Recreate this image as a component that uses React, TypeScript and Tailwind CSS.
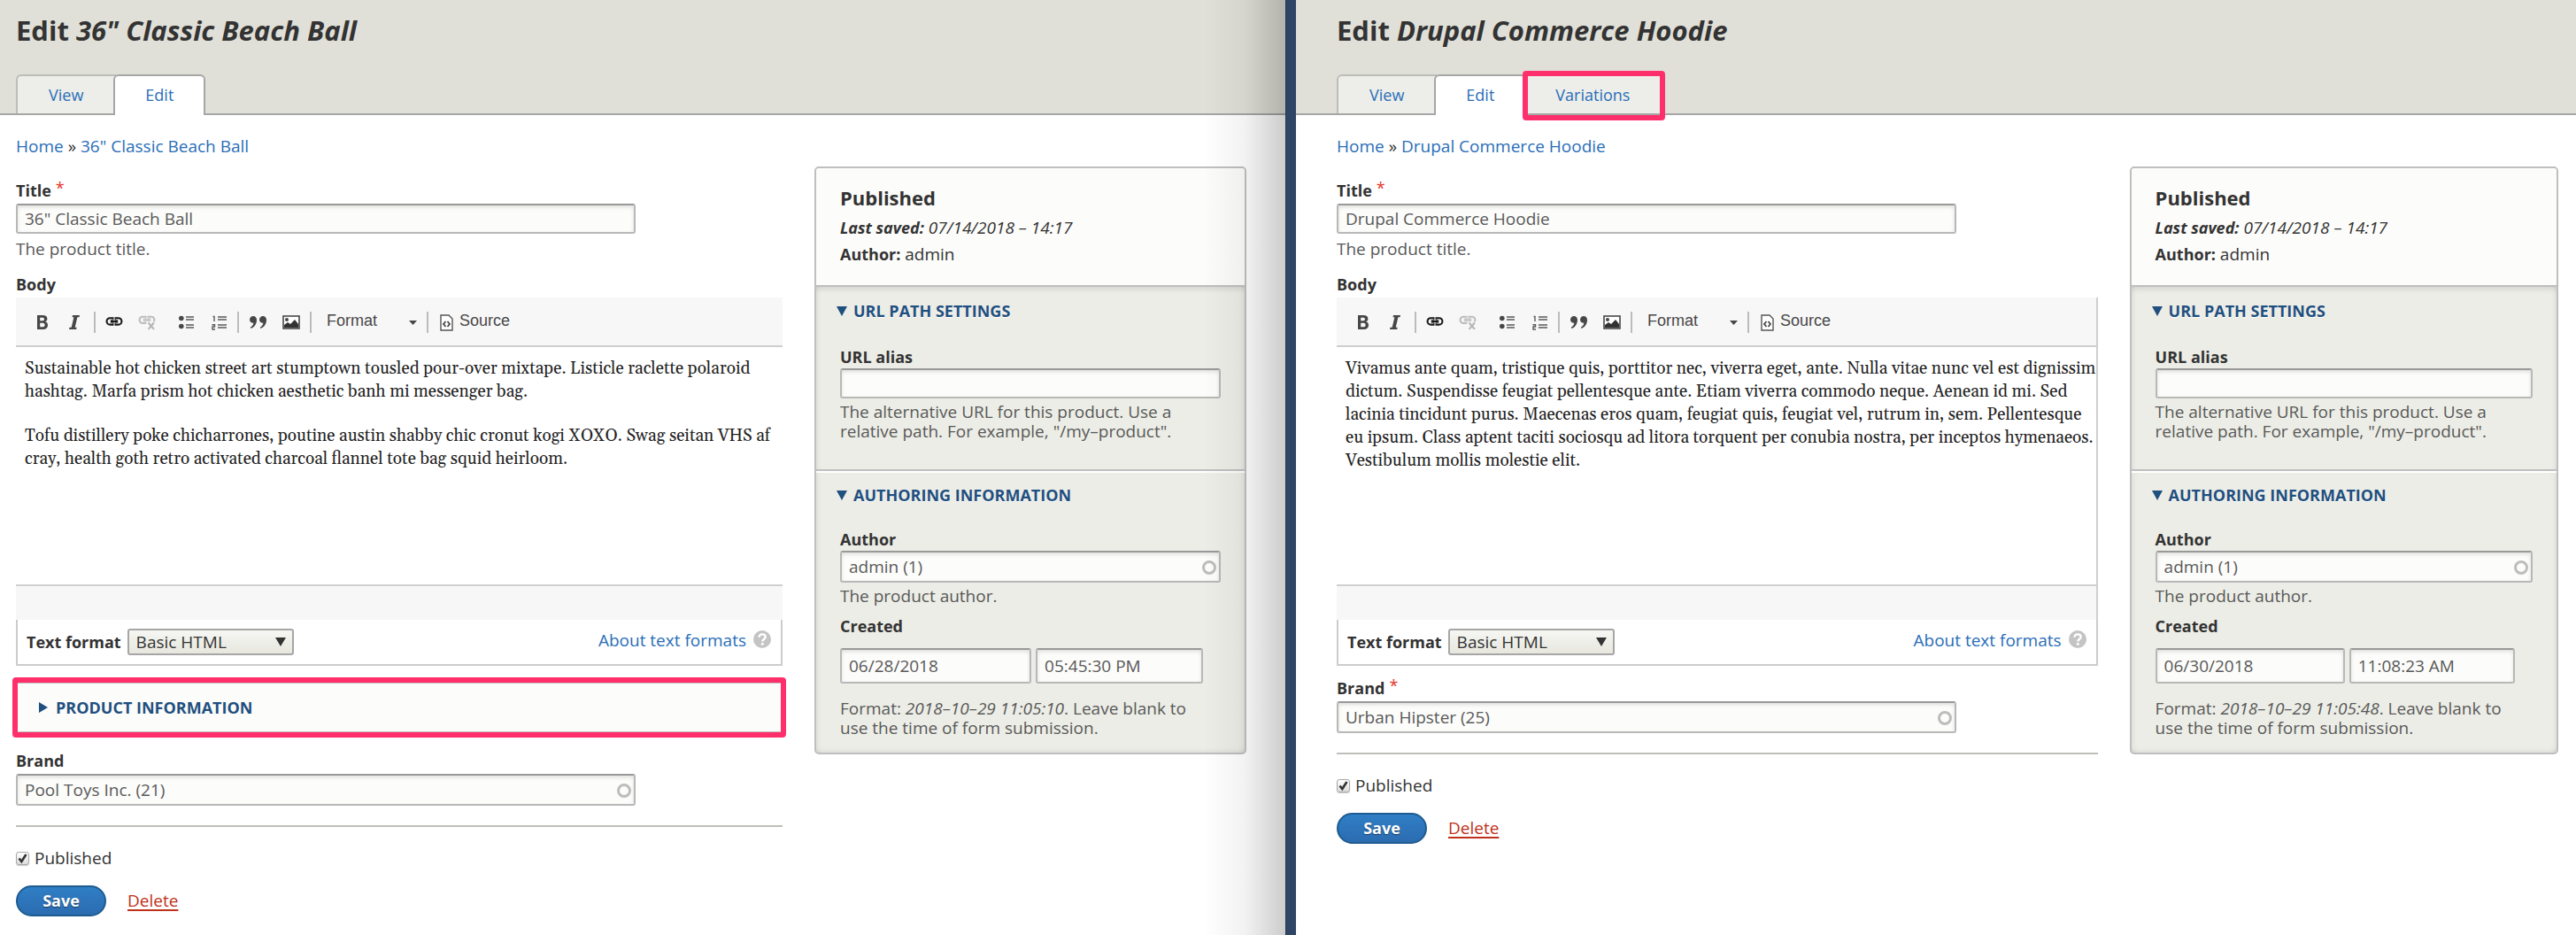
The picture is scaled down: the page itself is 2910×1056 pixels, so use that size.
import { useId } from 'react';
import type { ReactNode } from 'react';

const INPUT =
  'block w-full rounded-[3px] border-2 border-[#b8b8b8] border-t-[#999999] bg-[#fcfcfa] px-2 text-[#595959] shadow-[inset_0_2px_4px_rgba(0,0,0,0.12)] outline-none';
const LABEL = 'block text-[18px] leading-[26px] font-bold';
const HELP = 'leading-[22px] text-[#595959]';

type Product = {
  name: string;
  tabs: string[];
  highlightedTab?: string;
  body: string[][];
  productInfo: boolean;
  brand: string;
  brandRequired: boolean;
  date: string;
  time: string;
  format: string;
  editorEdge: boolean;
};

const ball: Product = {
  name: '36" Classic Beach Ball',
  tabs: ['View', 'Edit'],
  body: [
    [
      'Sustainable hot chicken street art stumptown tousled pour-over mixtape. Listicle raclette polaroid',
      'hashtag. Marfa prism hot chicken aesthetic banh mi messenger bag.',
    ],
    [
      'Tofu distillery poke chicharrones, poutine austin shabby chic cronut kogi XOXO. Swag seitan VHS af',
      'cray, health goth retro activated charcoal flannel tote bag squid heirloom.',
    ],
  ],
  productInfo: true,
  brand: 'Pool Toys Inc. (21)',
  brandRequired: false,
  date: '06/28/2018',
  time: '05:45:30 PM',
  format: '2018–10–29 11:05:10',
  editorEdge: false,
};

const hoodie: Product = {
  name: 'Drupal Commerce Hoodie',
  tabs: ['View', 'Edit', 'Variations'],
  highlightedTab: 'Variations',
  body: [
    [
      'Vivamus ante quam, tristique quis, porttitor nec, viverra eget, ante. Nulla vitae nunc vel est dignissim',
      'dictum. Suspendisse feugiat pellentesque ante. Etiam viverra commodo neque. Aenean id mi. Sed',
      'lacinia tincidunt purus. Maecenas eros quam, feugiat quis, feugiat vel, rutrum in, sem. Pellentesque',
      'eu ipsum. Class aptent taciti sociosqu ad litora torquent per conubia nostra, per inceptos hymenaeos.',
      'Vestibulum mollis molestie elit.',
    ],
  ],
  productInfo: false,
  brand: 'Urban Hipster (25)',
  brandRequired: true,
  date: '06/30/2018',
  time: '11:08:23 AM',
  format: '2018–10–29 11:05:48',
  editorEdge: true,
};

function Required() {
  return <span className="ml-[5px] align-[3px] leading-none font-normal text-[#e5352b]">*</span>;
}

function Tool({ label, className, children }: { label: string; className: string; children: ReactNode }) {
  return (
    <button type="button" aria-label={label} className={`shrink-0 ${className}`}>
      {children}
    </button>
  );
}

function Separator({ className }: { className: string }) {
  return <span className={`h-6 w-[2px] shrink-0 bg-[#bcbcbc] ${className}`} />;
}

function Chain({ color }: { color: string }) {
  return (
    <g fill="none" stroke={color}>
      <path strokeWidth="2" d="M8.5 2.5H5a3.5 3.5 0 0 0 0 7h3.500M10.500 2.500H14a3.500 3.500 0 0 1 0 7h-3.500" />
      <path strokeWidth="1" d="M8.500 4.500H5.500M10.500 4.500h3M8.500 7.500H5.500M10.500 7.500h3" opacity=".6" />
      <path strokeWidth="2" d="M5.500 6h8" />
      <path strokeWidth="1" d="M8.500 1.500v3M10.500 1.500v3M8.500 7.500v3M10.500 7.500v3" />
    </g>
  );
}

function Toolbar() {
  return (
    <div className="flex h-[54px] items-center bg-[#f7f7f7] pt-[2px] pl-6 text-[#474747]">
      <Tool label="Bold" className="w-3">
        <svg width="12" height="16" viewBox="0 0 12 16" className="block">
          <path
            fill="#474747"
            fillRule="evenodd"
            d="M0 0h6.200C9.600 0 11.400 1.500 11.400 4c0 1.700-.9 2.900-2.300 3.300C10.900 7.700 12 9 12 11.200 12 14.200 9.900 16 6.500 16H0zM3.200 2.700v3.500h2.500c1.500 0 2.300-.6 2.300-1.800S7.300 2.700 5.800 2.700zM3.200 8.800v4.500h2.900c1.600 0 2.500-.8 2.500-2.300S7.700 8.800 6.100 8.800z"
          />
        </svg>
      </Tool>
      <Tool label="Italic" className="ml-6 w-3">
        <svg width="12" height="16" viewBox="0 0 12 16" className="block">
          <path fill="#474747" d="M4 0h8l-.5 2.300H9.400L6.700 13.700h2L8.200 16H0l.5-2.300h2.200L5.400 2.300H3.500z" />
        </svg>
      </Tool>
      <Separator className="ml-4" />
      <Tool label="Link" className="ml-[11px]">
        <svg width="20" height="16" viewBox="0 0 19 14" className="block">
          <Chain color="#1a1a1a" />
        </svg>
      </Tool>
      <Tool label="Unlink" className="ml-[17px]">
        <svg width="20" height="18" viewBox="0 0 19 17" className="block">
          <Chain color="#bdbdbd" />
          <rect x="9" y="8" width="10" height="9" fill="#f7f7f7" />
          <path stroke="#b5b5b5" strokeWidth="2" d="m11 9 6 7M17 9l-6 7" />
        </svg>
      </Tool>
      <Tool label="Bulleted list" className="ml-[26px]">
        <svg width="17" height="16" viewBox="0 0 17 16" className="block">
          <circle cx="2.800" cy="3.500" r="2.800" fill="#474747" />
          <circle cx="2.800" cy="12.500" r="2.800" fill="#474747" />
          <path stroke="#5a5a5a" strokeWidth="1.400" d="M8 2h9M8 5h9M8 11h9M8 14h9" />
        </svg>
      </Tool>
      <Tool label="Numbered list" className="ml-5">
        <svg width="17" height="17" viewBox="0 0 17 17" className="block">
          <path fill="none" stroke="#5a5a5a" strokeWidth="1.400" d="M1.500 1.500H3V7M.5 10.700h3v2.300H1v3h3" />
          <path stroke="#5a5a5a" strokeWidth="1.400" d="M7 2h10M7 5h10M7 11h10M7 14h10" />
        </svg>
      </Tool>
      <Separator className="ml-3" />
      <Tool label="Block quote" className="ml-3">
        <svg width="19" height="14" viewBox="0 0 19 14" className="block">
          <path
            fill="#474747"
            d="M4 0c2.400 0 4 1.700 4 4.300C8 9 5.500 12.500 1.500 14L.8 12.800c2-1.200 3.300-2.800 3.600-5C1.800 8 0 6.300 0 4 0 1.700 1.800 0 4 0zM15 0c2.400 0 4 1.700 4 4.300 0 4.700-2.500 8.200-6.500 9.700l-.7-1.200c2-1.200 3.300-2.800 3.600-5C12.800 8 11 6.300 11 4c0-2.300 1.800-4 4-4z"
          />
        </svg>
      </Tool>
      <Tool label="Image" className="ml-[18px]">
        <svg width="20" height="16" viewBox="0 0 20 16" className="block">
          <rect x="1" y="1" width="18" height="14" fill="#fff" stroke="#474747" strokeWidth="1.600" />
          <circle cx="5" cy="5" r="2" fill="#474747" />
          <path fill="#333" d="M2 14v-3l4-3 3 2 5-5 4 5v4z" />
        </svg>
      </Tool>
      <Separator className="ml-[11px]" />
      <button
        type="button"
        className="ml-[17px] flex w-[102px] shrink-0 items-center justify-between font-['Liberation_Sans',Arial,sans-serif] text-[18px] leading-6"
      >
        <span className="pb-1">Format</span>
        <svg width="9" height="5" viewBox="0 0 9 5" className="block">
          <path fill="#474747" d="M0 0h9L4.500 5z" />
        </svg>
      </button>
      <Separator className="ml-[11px]" />
      <button
        type="button"
        className="ml-[13px] flex shrink-0 items-center font-['Liberation_Sans',Arial,sans-serif] text-[18px] leading-6"
      >
        <svg width="15" height="19" viewBox="0 0 15 19" className="block">
          <path fill="#fff" stroke="#555" strokeWidth="1.400" d="M1 1h9l4 4v13H1z" />
          <path fill="none" stroke="#474747" strokeWidth="1.800" d="M6.500 8 4 11l2.500 3M8.500 8l2.500 3-2.500 3" />
        </svg>
        <span className="ml-[7px] pb-1">Source</span>
      </button>
    </div>
  );
}

function Autocomplete({ id, value }: { id: string; value: string }) {
  return (
    <div className="relative">
      <input id={id} defaultValue={value} className={`${INPUT} h-9`} />
      <span className="pointer-events-none absolute top-[11px] right-[5px] size-4 rounded-full border-[3px] border-[#bdbdbd]" />
    </div>
  );
}

function Summary({ open, children }: { open?: boolean; children: ReactNode }) {
  return (
    <summary className="flex list-none items-center text-[18px] leading-[26px] font-bold text-[#1f4f7f] uppercase [text-shadow:0_1px_0_#fff]">
      {open ? (
        <svg width="12" height="11" viewBox="0 0 12 11" className="mr-[7px] -ml-1">
          <path fill="#1f4f7f" d="M0 0h12L6 11z" />
        </svg>
      ) : (
        <svg width="10" height="12" viewBox="0 0 10 12" className="mr-[9px]">
          <path fill="#1f4f7f" d="M0 0l10 6-10 6z" />
        </svg>
      )}
      {children}
    </summary>
  );
}

function Sidebar({ product }: { product: Product }) {
  const id = useId();
  return (
    <aside className="mt-[9px] self-start rounded-[5px] border-2 border-[#bfbfbf] bg-[#ecede6]">
      <div className="rounded-t-[3px] border-b-2 border-[#bfbfbf] bg-[#fcfcfa] px-[27px] pt-[18px] pb-5">
        <h2 className="text-[22px] leading-[30px] font-bold">Published</h2>
        <p className="mt-1 leading-[30px] italic">
          <strong className="text-[18px] font-bold">Last saved:</strong> 07/14/2018 – 14:17
        </p>
        <p className="leading-[30px]">
          <strong className="text-[18px] font-bold">Author:</strong> admin
        </p>
      </div>
      <details
        open
        className="border-b-2 border-[#bfbfbf] px-[27px] pt-[14px] pb-8 shadow-[inset_0_6px_6px_-4px_rgba(0,0,0,0.12),inset_6px_0_6px_-5px_rgba(0,0,0,0.08),inset_-6px_0_6px_-5px_rgba(0,0,0,0.08)]"
      >
        <Summary open>URL path settings</Summary>
        <label htmlFor={`${id}-alias`} className={`${LABEL} mt-[26px]`}>
          URL alias
        </label>
        <input id={`${id}-alias`} className={`${INPUT} h-[34px]`} />
        <p className={`${HELP} mt-1`}>
          The alternative URL for this product. Use a<br />
          relative path. For example, "/my–product".
        </p>
      </details>
      <details
        open
        className="rounded-b-[3px] border-t-2 border-white px-[27px] pt-3 pb-[17px] shadow-[inset_6px_0_6px_-5px_rgba(0,0,0,0.08),inset_-6px_0_6px_-5px_rgba(0,0,0,0.08),inset_0_-6px_6px_-5px_rgba(0,0,0,0.08)]"
      >
        <Summary open>Authoring information</Summary>
        <label htmlFor={`${id}-author`} className={`${LABEL} mt-6`}>
          Author
        </label>
        <Autocomplete id={`${id}-author`} value="admin (1)" />
        <p className={`${HELP} mt-1`}>The product author.</p>
        <h4 className={`${LABEL} mt-[10px] mb-3`}>Created</h4>
        <div className="flex gap-[5px] pr-5">
          <input aria-label="Date" defaultValue={product.date} className={`${INPUT} h-10 min-w-0 flex-[217]`} />
          <input aria-label="Time" defaultValue={product.time} className={`${INPUT} h-10 min-w-0 flex-[187]`} />
        </div>
        <p className={`${HELP} mt-[17px]`}>
          Format: <em>{product.format}</em>. Leave blank to
          <br />
          use the time of form submission.
        </p>
      </details>
    </aside>
  );
}

function Form({ product }: { product: Product }) {
  const id = useId();
  return (
    <form className="min-w-0 pt-[23px]" onSubmit={(e) => e.preventDefault()}>
      <div className="w-[700px] max-w-full">
        <label htmlFor={`${id}-title`} className={`${LABEL} mb-[2px]`}>
          Title
          <Required />
        </label>
        <input id={`${id}-title`} defaultValue={product.name} className={`${INPUT} h-[34px]`} />
        <p className={`${HELP} mt-[6px]`}>The product title.</p>
      </div>

      <div id={`${id}-body`} className={`${LABEL} mt-4 mb-[2px]`}>
        Body
      </div>
      <div className={product.editorEdge ? 'border-r-2 border-[#cfcfcf]' : ''}>
        <Toolbar />
        <div
          role="textbox"
          aria-multiline="true"
          aria-labelledby={`${id}-body`}
          contentEditable
          suppressContentEditableWarning
          className="h-[270px] space-y-6 border-t-2 border-[#cfcfcf] pt-[11px] pl-[10px] font-[Gelasio,Georgia,serif] text-[19px] leading-[26px] whitespace-nowrap text-[#222222] outline-none"
        >
          {product.body.map((lines) => (
            <p key={lines[0]}>
              {lines.map((line) => (
                <span key={line} className="block">
                  {line}
                </span>
              ))}
            </p>
          ))}
        </div>
        <div className="h-10 border-t-2 border-[#cfcfcf] bg-[#f7f7f7]" />
      </div>
      <div className="flex h-[52px] items-start justify-between border-x-2 border-b-2 border-[#cccccc] pt-[10px] pr-[11px] pl-[10px]">
        <div className="flex items-center">
          <label htmlFor={`${id}-format`} className="text-[18px] font-bold">
            Text format
          </label>
          <div className="relative ml-[7px]">
            <select
              id={`${id}-format`}
              className="block h-[30px] w-[188px] appearance-none rounded-[3px] border-2 border-[#a6a6a6] bg-linear-to-b from-[#f6f6f3] to-[#e7e7df] pl-2 leading-[26px] text-[#333333]"
            >
              <option>Basic HTML</option>
            </select>
            <svg
              width="12"
              height="10"
              viewBox="0 0 12 10"
              className="pointer-events-none absolute top-[10px] right-[9px]"
            >
              <path fill="#333" d="M0 0h12L6 10z" />
            </svg>
          </div>
        </div>
        <a href="#formats" className="flex items-center leading-[26px] text-[#2a6eb8]">
          About text formats
          <svg width="20" height="20" viewBox="0 0 20 20" className="-mt-[2px] ml-2">
            <circle cx="10" cy="10" r="10" fill="#c4c4c4" />
            <path
              fill="none"
              stroke="#fff"
              strokeWidth="2.400"
              d="M6.500 7.800C6.500 5.600 8 4.400 10 4.400s3.600 1.200 3.600 3c0 2.400-3.200 2.400-3.200 5"
            />
            <circle cx="10.300" cy="15.200" r="1.500" fill="#fff" />
          </svg>
        </a>
      </div>

      {product.productInfo && (
        <div className="relative mt-[18px]">
          <details className="border-2 border-[#bfbfbf] bg-[#fcfcfa] py-[14px] pl-6">
            <Summary>Product information</Summary>
          </details>
          <span className="pointer-events-none absolute -inset-x-1 -inset-y-[5px] rounded-[4px] border-[6px] border-[#ff2f6c]" />
        </div>
      )}

      <div className={`w-[700px] max-w-full ${product.productInfo ? 'mt-[18px]' : 'mt-3'}`}>
        <label htmlFor={`${id}-brand`} className={`${LABEL} mb-[2px]`}>
          Brand
          {product.brandRequired && <Required />}
        </label>
        <Autocomplete id={`${id}-brand`} value={product.brand} />
      </div>

      <hr className="mt-[22px] border-t-2 border-[#bfbfba]" />

      <label className="mt-[22px] flex items-center gap-[6px] leading-[26px]">
        <span className="relative block size-[15px]">
          <input
            type="checkbox"
            defaultChecked
            className="peer block size-[15px] appearance-none rounded-[3px] border border-[#a8a8a8] bg-linear-to-b from-white to-[#dcdcdc] shadow-[0_1px_1px_rgba(0,0,0,0.2)]"
          />
          <svg
            viewBox="0 0 15 15"
            className="pointer-events-none absolute inset-0 hidden size-[15px] peer-checked:block"
          >
            <path fill="none" stroke="#333" strokeWidth="2.600" d="M3.500 7.500 6.300 11l5.200-8" />
          </svg>
        </span>
        Published
      </label>

      <div className="mt-[18px] flex items-center">
        <button
          type="submit"
          className="h-[35px] w-[102px] rounded-full border-2 border-[#1e5c90] bg-linear-to-b from-[#2f7ec6] to-[#2c6cb0] pb-[2px] text-[18px] leading-[28px] font-bold text-white [text-shadow:0_1px_1px_rgba(0,0,0,0.5)]"
        >
          Save
        </button>
        <a href="#delete" className="ml-6 pb-[2px] leading-[26px] text-[#c0311a] underline decoration-2 underline-offset-[3px]">
          Delete
        </a>
      </div>
    </form>
  );
}

function EditPage({ product, className }: { product: Product; className: string }) {
  return (
    <section className="relative min-w-0 bg-white">
      <header className={`border-b-2 border-[#a6a6a6] bg-[#e0e0d8] pt-[14px] ${className}`}>
        <h1 className="mb-[30px] text-[31px] leading-[40px] font-bold">
          Edit <em>{product.name}</em>
        </h1>
        <nav className="-mb-[2px] flex items-start text-[18px]">
          {product.tabs.map((tab, i) => (
            <a
              key={tab}
              href={`#${tab.toLowerCase()}`}
              className={
                tab === 'Edit'
                  ? 'relative rounded-t-[6px] border-x-2 border-t-2 border-[#a6a6a6] bg-white px-[34px] pt-[7px] pb-[9px] leading-[28px] text-[#2a6eb8]'
                  : `relative border-t-2 border-[#bdbdb9] bg-[#edeee9] pt-[7px] pb-[7px] leading-[28px] text-[#2a6eb8] ${
                      i === 0 ? '-mr-[3px] rounded-tl-[6px] border-l-2 pr-[37px] pl-[35px]' : '-ml-1 pr-10 pl-[37px]'
                    }`
              }
            >
              {tab}
              {tab === product.highlightedTab && (
                <span className="pointer-events-none absolute -top-[6px] right-0 -bottom-[8px] left-0 rounded-[4px] border-[6px] border-[#ff2f6c]" />
              )}
            </a>
          ))}
        </nav>
      </header>
      <main className={className}>
        <nav aria-label="Breadcrumb" className="pt-[21px] leading-[28px]">
          <a href="#home" className="text-[#2a6eb8]">
            Home
          </a>{' '}
          »{' '}
          <a href="#product" className="text-[#2a6eb8]">
            {product.name}
          </a>
        </nav>
        <div className="grid grid-cols-[866fr_488fr] gap-9">
          <Form product={product} />
          <Sidebar product={product} />
        </div>
      </main>
    </section>
  );
}

export default function App() {
  return (
    <div className="grid min-h-screen grid-cols-[1452fr_12px_1446fr] overflow-hidden bg-white font-['Open_Sans','Noto_Sans',sans-serif] text-[19px] text-[#333333]">
      <div className="relative min-w-0">
        <EditPage product={ball} className="pr-[44px] pl-[18px]" />
        <div className="pointer-events-none absolute inset-y-0 right-0 w-[92px] bg-linear-to-r from-transparent via-black/5 to-black/20" />
      </div>
      <div className="border-l border-[#24344d] bg-[#2f4565]" />
      <EditPage product={hoodie} className="pr-5 pl-[46px]" />
    </div>
  );
}
